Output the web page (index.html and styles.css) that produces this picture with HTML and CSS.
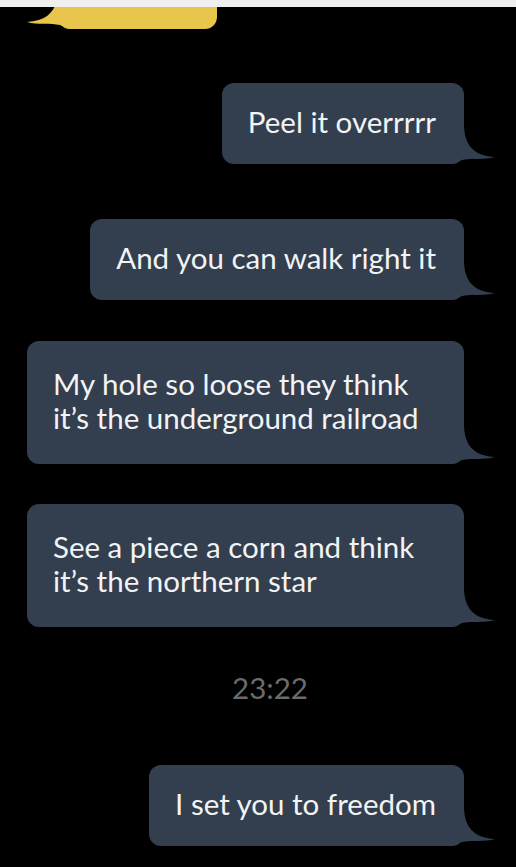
FILE: index.html
```html
<!DOCTYPE html>
<html lang="en">
<head>
<meta charset="utf-8">
<title>Chat</title>
<link rel="stylesheet" href="styles.css">
</head>
<body>
<div class="topbar"></div>
<div class="chat">
  <div class="bubble in yellow">
    <svg class="tail tail-left" viewBox="0 0 44 40" width="44" height="40"><path d="M0 0 H13 C13 20 22 32 44 33 C34 36 20 34 11 36 C7 37 4 40 0 40 Z"/></svg>
  </div>
  <div class="bubble out gap-54">Peel it overrrrr<svg class="tail" viewBox="0 0 44 40" width="44" height="40"><path d="M0 0 H13 C13 20 22 32 44 33 C34 36 20 34 11 36 C7 37 4 40 0 40 Z"/></svg></div>
  <div class="bubble out gap-55">And you can walk right it<svg class="tail" viewBox="0 0 44 40" width="44" height="40"><path d="M0 0 H13 C13 20 22 32 44 33 C34 36 20 34 11 36 C7 37 4 40 0 40 Z"/></svg></div>
  <div class="bubble out multi gap-41">My hole so loose they think it’s the underground railroad<svg class="tail" viewBox="0 0 44 40" width="44" height="40"><path d="M0 0 H13 C13 20 22 32 44 33 C34 36 20 34 11 36 C7 37 4 40 0 40 Z"/></svg></div>
  <div class="bubble out multi gap-40">See a piece a corn and think it’s the northern star<svg class="tail" viewBox="0 0 44 40" width="44" height="40"><path d="M0 0 H13 C13 20 22 32 44 33 C34 36 20 34 11 36 C7 37 4 40 0 40 Z"/></svg></div>
  <div class="stamp">23:22</div>
  <div class="bubble out gap-60">I set you to freedom<svg class="tail" viewBox="0 0 44 40" width="44" height="40"><path d="M0 0 H13 C13 20 22 32 44 33 C34 36 20 34 11 36 C7 37 4 40 0 40 Z"/></svg></div>
</div>
</body>
</html>
```
FILE: styles.css
```css
html, body {
  margin: 0;
  padding: 0;
  background: #000;
}
body {
  font-family: Lato, "Liberation Sans", sans-serif;
  color: #f2f3f4;
  height: 867px;
  overflow: hidden;
}
.topbar {
  height: 7px;
  background: #efefef;
  position: relative;
  z-index: 2;
}
.chat {
  display: flex;
  flex-direction: column;
  padding: 0 52px 0 27px;
}
.bubble {
  position: relative;
  box-sizing: border-box;
  max-width: 437px;
  background: #333f4f;
  border-radius: 12px;
  font-size: 29.5px;
  line-height: 34px;
  padding: 22px 28px 25px 26px;
}
.bubble .tail {
  position: absolute;
  right: -31px;
  bottom: 0;
  fill: #333f4f;
}
.bubble.multi {
  padding-top: 26px;
  padding-bottom: 29px;
}
.out {
  align-self: flex-end;
}
.yellow {
  align-self: flex-start;
  margin-left: 31px;
  width: 159px;
  height: 22px;
  padding: 0;
  background: #e8c54b;
  border-radius: 0 0 12px 12px;
}
.yellow .tail-left {
  right: auto;
  left: -31px;
  transform: scaleX(-1);
  fill: #e8c54b;
}
.gap-54 { margin-top: 54px; }
.gap-55 { margin-top: 55px; }
.gap-41 { margin-top: 41px; }
.gap-40 { margin-top: 40px; }
.gap-60 { margin-top: 60px; }
.stamp {
  margin-top: 44px;
  padding-left: 49px;
  text-align: center;
  font-size: 29.5px;
  line-height: 34px;
  color: #6b6b6b;
}
```
